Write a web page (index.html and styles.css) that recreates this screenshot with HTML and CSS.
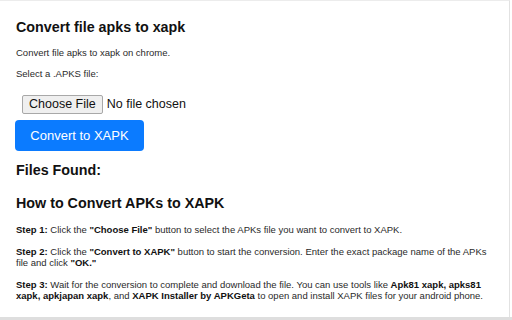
FILE: index.html
```html
<!DOCTYPE html>
<html lang="en">
<head>
<meta charset="utf-8">
<title>Convert file apks to xapk</title>
<link rel="stylesheet" href="styles.css">
</head>
<body>
<div class="frame">
  <main class="page">
    <h1 class="title">Convert file apks to xapk</h1>
    <p class="text">Convert file apks to xapk on chrome.</p>
    <p class="text">Select a .APKS file:</p>
    <div class="file-row">
      <button class="file-btn" type="button">Choose File</button>
      <span class="file-name">No file chosen</span>
    </div>
    <button class="convert-btn" type="button">Convert to XAPK</button>
    <h2 class="heading found">Files Found:</h2>
    <h2 class="heading how">How to Convert APKs to XAPK</h2>
    <p class="text step"><b>Step 1:</b> Click the <b>"Choose File"</b> button to select the APKs file you want to convert to XAPK.</p>
    <p class="text step"><b>Step 2:</b> Click the <b>"Convert to XAPK"</b> button to start the conversion. Enter the exact package name of the APKs file and click <b>"OK."</b></p>
    <p class="text step"><b>Step 3:</b> Wait for the conversion to complete and download the file. You can use tools like <b>Apk81 xapk, apks81 xapk, apkjapan xapk</b>, and <b>XAPK Installer by APKGeta</b> to open and install XAPK files for your android phone.</p>
  </main>
  <div class="bottom-bar"></div>
</div>
</body>
</html>
```

FILE: styles.css
```css
html, body {
  margin: 0;
  padding: 0;
  background: #ffffff;
}

body {
  font-family: "Liberation Sans", Arial, sans-serif;
  color: #1f1f1f;
  width: 512px;
  height: 320px;
  overflow: hidden;
}

.frame {
  width: 512px;
  height: 320px;
  display: flex;
  flex-direction: column;
}

.page {
  flex: 1;
  width: 477px;
  padding: 19px 16px 0 16px;
  border-top: 1px solid #ececec;
  border-right: 1px solid #e2e2e2;
  box-sizing: content-box;
  overflow: hidden;
}

.title,
.heading {
  font-size: 14.3px;
  line-height: 17px;
  font-weight: bold;
  color: #111111;
  margin: 0;
}

.title {
  margin-top: -1px;
  margin-bottom: 11px;
}

.text {
  font-size: 9.5px;
  line-height: 11.4px;
  margin: 0 0 10px 0;
  color: #2a2a2a;
}

.text b {
  color: #111111;
}

.file-row {
  display: flex;
  align-items: center;
  gap: 4px;
  margin: 15px 0 6px 6px;
}

.file-btn {
  font-family: "Liberation Sans", Arial, sans-serif;
  font-size: 12.5px;
  line-height: 15px;
  height: 19px;
  padding: 0 6px;
  background: #efefef;
  border: 1px solid #a8a8a8;
  border-radius: 2px;
  color: #111111;
}

.file-name {
  font-size: 12.5px;
  color: #111111;
}

.convert-btn {
  display: block;
  font-family: "Liberation Sans", Arial, sans-serif;
  font-size: 13px;
  width: 129px;
  height: 31px;
  margin-left: -1px;
  padding: 0;
  background: #0b7bff;
  color: #ffffff;
  border: none;
  border-radius: 4px;
}

.found {
  margin-top: 11px;
}

.how {
  margin-top: 16px;
  margin-bottom: 12.5px;
}

.step {
  margin-bottom: 10px;
}

.bottom-bar {
  height: 3px;
  background: #dedede;
}
```
